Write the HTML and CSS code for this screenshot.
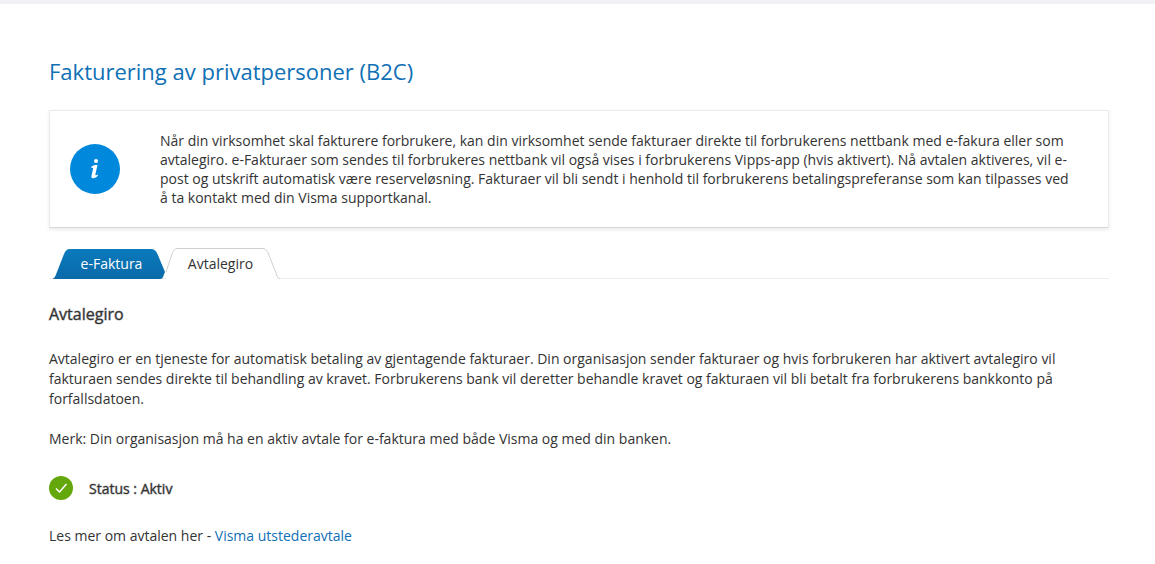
FILE: index.html
```html
<!DOCTYPE html>
<html lang="no">
<head>
<meta charset="utf-8">
<title>Fakturering av privatpersoner (B2C)</title>
<link rel="stylesheet" href="styles.css">
</head>
<body>
<main class="page">
  <h1 class="page-title">Fakturering av privatpersoner (B2C)</h1>
  <section class="info-panel">
    <svg class="info-icon" viewBox="0 0 50 50" aria-hidden="true">
      <circle cx="25" cy="25" r="25" fill="#0089dc"/>
      <circle cx="26" cy="17" r="2" fill="#fff"/>
      <path d="M21.300 22.800C23 21.200 25.500 20.800 27.500 21.100L25.400 30.300C25.200 31.500 26 31.700 27.700 30.400L28 31.500C26.500 33.400 24.500 34.300 23 34.200C21.500 34.100 21.200 33 21.500 31.700L23.100 24.600C23.300 23.500 22.800 23.400 21.500 24Z" fill="#fff"/>
    </svg>
    <p class="info-text">Når din virksomhet skal fakturere forbrukere, kan din virksomhet sende fakturaer direkte til forbrukerens nettbank med e-fakura eller som avtalegiro. e-Fakturaer som sendes til forbrukeres nettbank vil også vises i forbrukerens Vipps-app (hvis aktivert). Nå avtalen aktiveres, vil e-post og utskrift automatisk være reserveløsning. Fakturaer vil bli sendt i henhold til forbrukerens betalingspreferanse som kan tilpasses ved å ta kontakt med din Visma supportkanal.</p>
  </section>
  <div class="tabs" role="tablist">
    <button class="tab tab-filled" type="button" role="tab" aria-selected="false">
      <svg class="tab-shape" viewBox="0 0 113 31" aria-hidden="true">
        <defs><linearGradient id="tab-blue" x1="0" y1="0" x2="0" y2="1"><stop offset="0" stop-color="#0a7abc"/><stop offset="1" stop-color="#0a6aa9"/></linearGradient></defs>
        <path d="M0 31V30.500C1.500 30 2 29 2.800 27L11 6C12.500 2.500 14 1 17 1H98C101 1 103 2.500 104.500 6L112 24L110 29Q109.500 31 107.500 31Z" fill="url(#tab-blue)"/>
      </svg>
      <span class="tab-label">e-Faktura</span>
    </button>
    <button class="tab tab-open" type="button" role="tab" aria-selected="true">
      <svg class="tab-shape" viewBox="0 0 113 31" aria-hidden="true">
        <path d="M0 24L6 6C7.500 2 9 .5 12 .5H96C99 .5 101 2 102.500 6L110 25C111 28 111.500 30.500 114 30.500V31H0Z" fill="#fff"/>
        <path d="M0 24L6 6C7.500 2 9 .5 12 .5H96C99 .5 101 2 102.500 6L110 25C111 28 111.500 30.500 114 30.500" fill="none" stroke="#d0d0d0"/>
      </svg>
      <span class="tab-label">Avtalegiro</span>
    </button>
  </div>
  <section class="tab-content" role="tabpanel">
    <h2 class="section-title">Avtalegiro</h2>
    <p class="paragraph">Avtalegiro er en tjeneste for automatisk betaling av gjentagende fakturaer. Din organisasjon sender fakturaer og hvis forbrukeren har aktivert avtalegiro vil fakturaen sendes direkte til behandling av kravet. Forbrukerens bank vil deretter behandle kravet og fakturaen vil bli betalt fra forbrukerens bankkonto på forfallsdatoen.</p>
    <p class="paragraph">Merk: Din organisasjon må ha en aktiv avtale for e-faktura med både Visma og med din banken.</p>
    <div class="status">
      <svg class="status-icon" viewBox="0 0 24 24" aria-hidden="true">
        <circle cx="12" cy="12" r="12" fill="#64a70b"/>
        <path d="M7 12.500L10.500 16L17.500 8" fill="none" stroke="#fff" stroke-width="1.500"/>
      </svg>
      <strong class="status-text">Status : Aktiv</strong>
    </div>
    <p class="more">Les mer om avtalen her - <a class="link" href="#">Visma utstederavtale</a></p>
  </section>
</main>
</body>
</html>
```
FILE: styles.css
```css
* {
  box-sizing: border-box;
}

body {
  margin: 0;
  background: #fff;
  border-top: 4px solid #f0f1f6;
  color: #333;
  font: 14px/20px "Open Sans", sans-serif;
}

.page {
  padding: 52px 46px 16px 49px;
}

.page-title {
  margin: 0 0 24px;
  color: #1070b5;
  font-size: 22px;
  font-weight: 400;
  line-height: 30px;
}

.info-panel {
  display: flex;
  align-items: center;
  gap: 40px;
  padding: 20px 36px 20px 20px;
  border: 1px solid #eaeaea;
  border-bottom-color: #d8d8d8;
  box-shadow: 0 2px 4px rgba(0, 0, 0, 0.08);
}

.info-icon {
  flex: none;
  width: 50px;
  height: 50px;
}

.info-text {
  margin: 0;
  line-height: 19px;
}

.tabs {
  display: flex;
  margin-top: 20px;
  padding-left: 4px;
  background: linear-gradient(#ececec, #ececec) bottom / 100% 1px no-repeat;
}

.tab {
  position: relative;
  width: 113px;
  height: 31px;
  padding: 0;
  border: 0;
  background: none;
  color: #333;
  font: inherit;
  cursor: pointer;
}

.tab-filled {
  padding-left: 4px;
  color: #fff;
}

.tab-open {
  padding-right: 4px;
}

.tab-shape {
  position: absolute;
  inset: 0;
  width: 100%;
  height: 100%;
  overflow: visible;
}

.tab-label {
  position: relative;
}

.section-title {
  margin: 24px 0;
  font-size: 16px;
  font-weight: 400;
  line-height: 22px;
  -webkit-text-stroke: 1px rgba(51, 51, 51, 0.4);
}

.paragraph {
  margin: 0 0 20px;
}

.status {
  display: flex;
  align-items: center;
  gap: 16px;
  margin: 27px 0 26px;
}

.status-icon {
  width: 24px;
  height: 24px;
}

.status-text {
  padding-top: 2px;
  font-weight: 400;
  -webkit-text-stroke: 1px rgba(51, 51, 51, 0.4);
}

.more {
  margin: 0;
}

.link {
  color: #1070b5;
  text-decoration: none;
}
```
